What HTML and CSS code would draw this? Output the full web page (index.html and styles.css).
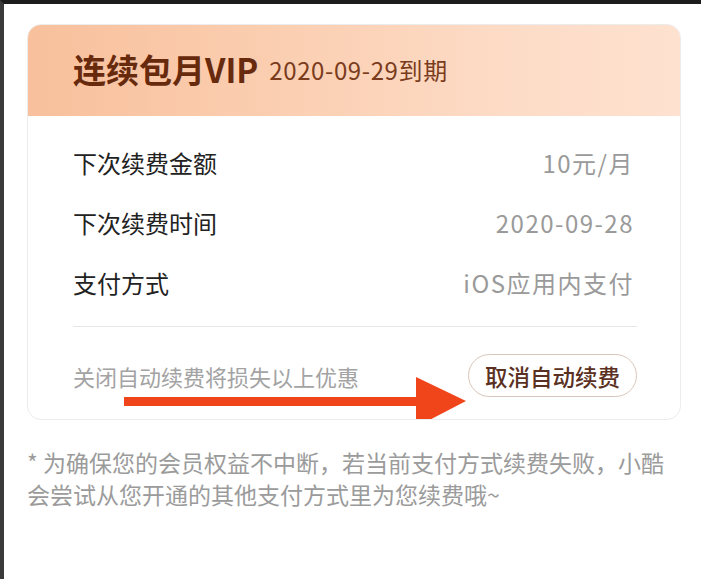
FILE: index.html
```html
<!DOCTYPE html>
<html lang="zh-CN">
<head>
<meta charset="utf-8">
<title>连续包月VIP</title>
<link rel="stylesheet" href="styles.css">
</head>
<body>
<div class="frame">
  <div class="card">
    <div class="card-head">
      <span class="title">连续包月VIP</span>
      <span class="expire">2020-09-29到期</span>
    </div>
    <div class="card-body">
      <div class="row"><span class="label">下次续费金额</span><span class="value">10元/月</span></div>
      <div class="row"><span class="label">下次续费时间</span><span class="value">2020-09-28</span></div>
      <div class="row"><span class="label">支付方式</span><span class="value">iOS应用内支付</span></div>
      <div class="divider"></div>
      <div class="foot">
        <span class="hint">关闭自动续费将损失以上优惠</span>
        <button class="cancel">取消自动续费</button>
      </div>
    </div>
    <svg class="arrow" width="342" height="50" viewBox="0 0 342 50">
      <polygon points="0,20 292,20 292,0 342,24 292,50 292,29 0,29" fill="#f0441a"/>
    </svg>
  </div>
  <p class="note">* 为确保您的会员权益不中断，若当前支付方式续费失败，小酷会尝试从您开通的其他支付方式里为您续费哦~</p>
</div>
</body>
</html>
```
FILE: styles.css
```css
html, body {
  margin: 0;
  padding: 0;
  background: #fff;
}
.frame {
  box-sizing: border-box;
  width: 701px;
  height: 579px;
  border-top: 4px solid #1c1c1c;
  border-left: 4px solid #3a3a3a;
  padding: 20px 20px 0 23px;
  font-family: "Noto Sans CJK SC", "Noto Sans", sans-serif;
  overflow: hidden;
}
.card {
  position: relative;
  border: 1px solid #ececec;
  border-radius: 14px;
  overflow: hidden;
  background: #fff;
}
.card-head {
  height: 91px;
  display: flex;
  align-items: center;
  padding-left: 45px;
  background: linear-gradient(90deg, #f8c09c 0%, #fbcfb2 40%, #fddcc7 75%, #fee1cf 100%);
  gap: 11px;
}
.title {
  font-size: 33px;
  font-weight: 700;
  color: #682a0d;
  margin-top: -4px;
}
.expire {
  font-size: 24px;
  letter-spacing: 0.6px;
  color: #7a3c1c;
  margin-top: -2px;
}
.card-body {
  padding: 16px 43px 22px 45px;
}
.row {
  height: 60px;
  display: flex;
  align-items: center;
  justify-content: space-between;
}
.label {
  font-size: 24px;
  color: #222;
}
.value {
  font-size: 24px;
  letter-spacing: 1.5px;
  color: #9a9a9a;
  padding-right: 3px;
}
.divider {
  height: 1px;
  background: #e6e6e6;
  margin-top: 14px;
}
.foot {
  display: flex;
  align-items: center;
  justify-content: space-between;
  padding-top: 27px;
}
.hint {
  font-size: 22px;
  color: #a3a3a3;
}
.cancel {
  height: 43px;
  padding: 0 16px;
  border: 1px solid #d8c6bc;
  border-radius: 22px;
  background: #fff;
  font-family: "Noto Sans CJK SC", "Noto Sans", sans-serif;
  font-size: 22.5px;
  font-weight: 500;
  color: #5a3022;
}
.arrow {
  position: absolute;
  left: 96px;
  top: 352px;
}
.note {
  margin: 26px 0 0 0;
  font-size: 23px;
  line-height: 32px;
  color: #9b9b9b;
}
```
